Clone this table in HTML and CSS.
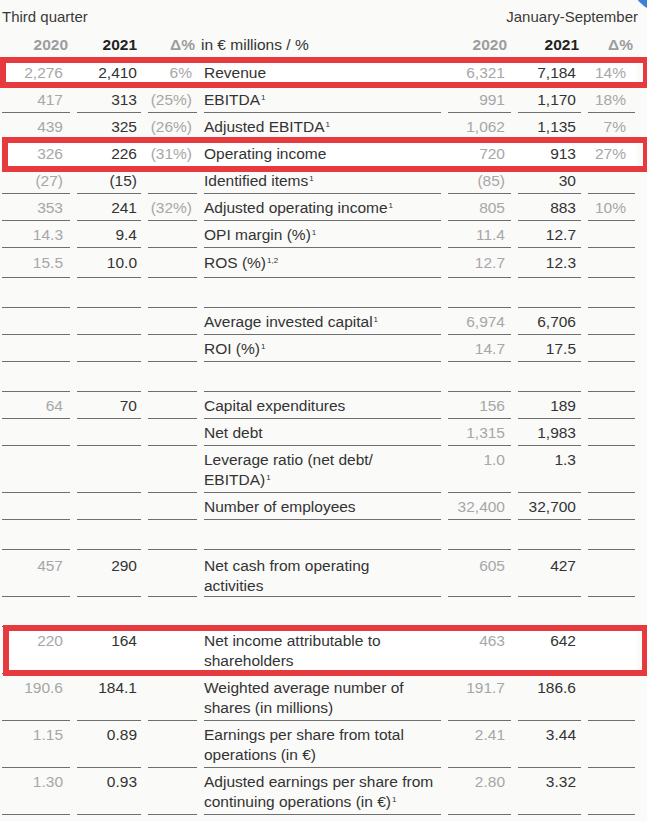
FILE: index.html
```html
<!DOCTYPE html>
<html>
<head>
<meta charset="utf-8">
<link rel="stylesheet" href="styles.css">
</head>
<body>
<div class="page">
  <span class="corner-dot"></span>
  <div class="top">
    <span>Third quarter</span>
    <span>January-September</span>
  </div>
  <div class="table">
    <div class="row head">
      <div class="c c1 gray">2020</div>
      <div class="c c2">2021</div>
      <div class="c c3 gray">Δ%</div>
      <div class="c lbl"><span class="unit">in € millions / %</span></div>
      <div class="c c5 gray">2020</div>
      <div class="c c6">2021</div>
      <div class="c c7 gray">Δ%</div>
    </div>
    <div class="row hl hl1">
      <div class="c c1 gray">2,276</div><div class="c c2">2,410</div><div class="c c3 gray">6%</div>
      <div class="c lbl">Revenue</div>
      <div class="c c5 gray">6,321</div><div class="c c6">7,184</div><div class="c c7 gray">14%</div>
    </div>
    <div class="row">
      <div class="c c1 gray">417</div><div class="c c2">313</div><div class="c c3 gray">(25%)</div>
      <div class="c lbl">EBITDA<sup>1</sup></div>
      <div class="c c5 gray">991</div><div class="c c6">1,170</div><div class="c c7 gray">18%</div>
    </div>
    <div class="row">
      <div class="c c1 gray">439</div><div class="c c2">325</div><div class="c c3 gray">(26%)</div>
      <div class="c lbl">Adjusted EBITDA<sup>1</sup></div>
      <div class="c c5 gray">1,062</div><div class="c c6">1,135</div><div class="c c7 gray">7%</div>
    </div>
    <div class="row hl hl2">
      <div class="c c1 gray">326</div><div class="c c2">226</div><div class="c c3 gray">(31%)</div>
      <div class="c lbl">Operating income</div>
      <div class="c c5 gray">720</div><div class="c c6">913</div><div class="c c7 gray">27%</div>
    </div>
    <div class="row">
      <div class="c c1 gray">(27)</div><div class="c c2">(15)</div><div class="c c3 gray"></div>
      <div class="c lbl">Identified items<sup>1</sup></div>
      <div class="c c5 gray">(85)</div><div class="c c6">30</div><div class="c c7 gray"></div>
    </div>
    <div class="row">
      <div class="c c1 gray">353</div><div class="c c2">241</div><div class="c c3 gray">(32%)</div>
      <div class="c lbl">Adjusted operating income<sup>1</sup></div>
      <div class="c c5 gray">805</div><div class="c c6">883</div><div class="c c7 gray">10%</div>
    </div>
    <div class="row">
      <div class="c c1 gray">14.3</div><div class="c c2">9.4</div><div class="c c3 gray"></div>
      <div class="c lbl">OPI margin (%)<sup>1</sup></div>
      <div class="c c5 gray">11.4</div><div class="c c6">12.7</div><div class="c c7 gray"></div>
    </div>
    <div class="row tall">
      <div class="c c1 gray">15.5</div><div class="c c2">10.0</div><div class="c c3 gray"></div>
      <div class="c lbl">ROS (%)<sup>1,2</sup></div>
      <div class="c c5 gray">12.7</div><div class="c c6">12.3</div><div class="c c7 gray"></div>
    </div>
    <div class="row empty">
      <div class="c c1"></div><div class="c c2"></div><div class="c c3"></div><div class="c lbl"></div><div class="c c5"></div><div class="c c6"></div><div class="c c7"></div>
    </div>
    <div class="row">
      <div class="c c1 gray"></div><div class="c c2"></div><div class="c c3 gray"></div>
      <div class="c lbl">Average invested capital<sup>1</sup></div>
      <div class="c c5 gray">6,974</div><div class="c c6">6,706</div><div class="c c7 gray"></div>
    </div>
    <div class="row">
      <div class="c c1 gray"></div><div class="c c2"></div><div class="c c3 gray"></div>
      <div class="c lbl">ROI (%)<sup>1</sup></div>
      <div class="c c5 gray">14.7</div><div class="c c6">17.5</div><div class="c c7 gray"></div>
    </div>
    <div class="row empty">
      <div class="c c1"></div><div class="c c2"></div><div class="c c3"></div><div class="c lbl"></div><div class="c c5"></div><div class="c c6"></div><div class="c c7"></div>
    </div>
    <div class="row">
      <div class="c c1 gray">64</div><div class="c c2">70</div><div class="c c3 gray"></div>
      <div class="c lbl">Capital expenditures</div>
      <div class="c c5 gray">156</div><div class="c c6">189</div><div class="c c7 gray"></div>
    </div>
    <div class="row">
      <div class="c c1 gray"></div><div class="c c2"></div><div class="c c3 gray"></div>
      <div class="c lbl">Net debt</div>
      <div class="c c5 gray">1,315</div><div class="c c6">1,983</div><div class="c c7 gray"></div>
    </div>
    <div class="row">
      <div class="c c1 gray"></div><div class="c c2"></div><div class="c c3 gray"></div>
      <div class="c lbl">Leverage ratio (net debt/<br>EBITDA)<sup>1</sup></div>
      <div class="c c5 gray">1.0</div><div class="c c6">1.3</div><div class="c c7 gray"></div>
    </div>
    <div class="row">
      <div class="c c1 gray"></div><div class="c c2"></div><div class="c c3 gray"></div>
      <div class="c lbl">Number of employees</div>
      <div class="c c5 gray">32,400</div><div class="c c6">32,700</div><div class="c c7 gray"></div>
    </div>
    <div class="row empty">
      <div class="c c1"></div><div class="c c2"></div><div class="c c3"></div><div class="c lbl"></div><div class="c c5"></div><div class="c c6"></div><div class="c c7"></div>
    </div>
    <div class="row dbl">
      <div class="c c1 gray">457</div><div class="c c2">290</div><div class="c c3 gray"></div>
      <div class="c lbl">Net cash from operating<br>activities</div>
      <div class="c c5 gray">605</div><div class="c c6">427</div><div class="c c7 gray"></div>
    </div>
    <div class="row empty">
      <div class="c c1"></div><div class="c c2"></div><div class="c c3"></div><div class="c lbl"></div><div class="c c5"></div><div class="c c6"></div><div class="c c7"></div>
    </div>
    <div class="row hl hl3">
      <div class="c c1 gray">220</div><div class="c c2">164</div><div class="c c3 gray"></div>
      <div class="c lbl">Net income attributable to<br>shareholders</div>
      <div class="c c5 gray">463</div><div class="c c6">642</div><div class="c c7 gray"></div>
    </div>
    <div class="row">
      <div class="c c1 gray">190.6</div><div class="c c2">184.1</div><div class="c c3 gray"></div>
      <div class="c lbl">Weighted average number of<br>shares (in millions)</div>
      <div class="c c5 gray">191.7</div><div class="c c6">186.6</div><div class="c c7 gray"></div>
    </div>
    <div class="row">
      <div class="c c1 gray">1.15</div><div class="c c2">0.89</div><div class="c c3 gray"></div>
      <div class="c lbl">Earnings per share from total<br>operations (in €)</div>
      <div class="c c5 gray">2.41</div><div class="c c6">3.44</div><div class="c c7 gray"></div>
    </div>
    <div class="row">
      <div class="c c1 gray">1.30</div><div class="c c2">0.93</div><div class="c c3 gray"></div>
      <div class="c lbl">Adjusted earnings per share from<br>continuing operations (in €)<sup>1</sup></div>
      <div class="c c5 gray">2.80</div><div class="c c6">3.32</div><div class="c c7 gray"></div>
    </div>
  </div>
</div>
</body>
</html>
```
FILE: styles.css
```css
html, body {
  margin: 0;
  padding: 0;
  overflow: hidden;
  background: #fafaf9;
}
.page {
  position: relative;
  overflow: hidden;
  width: 647px;
  height: 821px;
  font-family: "Liberation Sans", Arial, sans-serif;
  font-size: 15.5px;
  color: #333333;
  padding: 0 10px 0 2px;
  box-sizing: border-box;
}
.corner-dot {
  position: absolute;
  left: 630px;
  top: -57px;
  width: 70px;
  height: 70px;
  border-radius: 50%;
  background: #3f80d6;
}
.top {
  display: flex;
  justify-content: space-between;
  height: 32px;
  line-height: 20px;
  padding-top: 7px;
  box-sizing: border-box;
  color: #3a3a3a;
  font-size: 15px;
  margin-right: -1px;
}
.row {
  position: relative;
  display: grid;
  grid-template-columns: 68px 64px 49px 237px 63px 63px 47px;
  column-gap: 7px;
}
.c {
  line-height: 20px;
  padding: 4px 0 2px;
  border-bottom: 1px solid #6f6f6f;
  text-align: right;
  white-space: nowrap;
}
.c1 { padding-right: 7px; }
.c2 { padding-right: 4px; }
.c3 { padding-right: 5px; }
.c5 { padding-right: 6px; }
.c6 { padding-right: 5px; }
.c7 { padding-right: 9px; }
.lbl { text-align: left; }
.gray { color: #a7a7a7; }
.row.tall .c { padding-top: 5px; padding-bottom: 4px; }
.row.dbl .c { padding-top: 6px; padding-bottom: 0; }
.row.empty .c { height: 30px; padding: 0; box-sizing: border-box; }
.row.head .c { font-weight: bold; padding-top: 3px; padding-bottom: 3px; }
.row.head .c1 { padding-right: 2px; }
.row.head .c3 { padding-right: 2px; }
.row.head .c5 { padding-right: 4px; }
.row.head .c6 { padding-right: 2px; }
.row.head .c7 { padding-right: 2px; }
.row.head .c2, .row.head .c6 { color: #222; }
.row.head .gray { color: #9d9d9d; }
.unit { font-weight: normal; margin-left: -3px; color: #333333; }
sup {
  font-size: 8px;
  line-height: 0;
  vertical-align: 5px;
  margin-left: 1px;
}
.hl { background: #fff; }
.hl::after {
  content: "";
  position: absolute;
  border: 6px solid #e63a3e;
  pointer-events: none;
}
.hl1::after { left: -2px; right: -12px; top: -2px; bottom: -2px; }
.hl2::after { left: 0; right: -12px; top: -3px; bottom: -5px; }
.hl3::after { left: 1px; right: -11px; top: -2px; bottom: -2px; }
```
